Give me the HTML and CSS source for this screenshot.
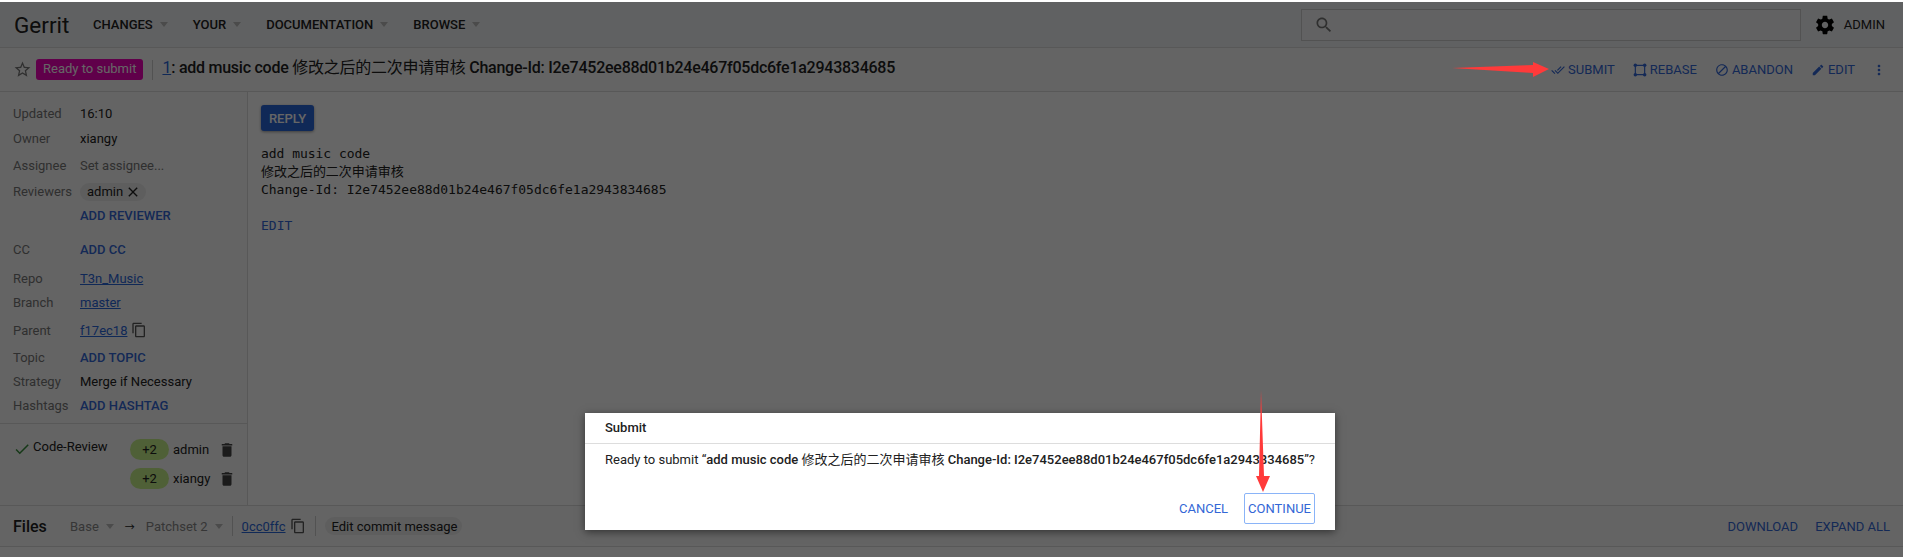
FILE: index.html
```html
<!DOCTYPE html>
<html lang="en">
<head>
  <meta charset="UTF-8">
  <title>Gerrit</title>
  <link rel="stylesheet" href="styles.css">
</head>
<body>
  <div class="page">
    <header class="topbar">
      <span class="logo">Gerrit</span>
      <nav class="nav">
        <span class="nav-item">CHANGES<i class="caret"></i></span>
        <span class="nav-item">YOUR<i class="caret"></i></span>
        <span class="nav-item">DOCUMENTATION<i class="caret"></i></span>
        <span class="nav-item">BROWSE<i class="caret"></i></span>
      </nav>
      <div class="search">
        <svg class="search-icon" viewBox="0 0 24 24"><path d="M15.5 14h-.79l-.28-.27C15.41 12.59 16 11.11 16 9.5 16 5.91 13.09 3 9.5 3S3 5.91 3 9.5 5.91 16 9.5 16c1.61 0 3.09-.59 4.23-1.57l.27.28v.79l5 4.99L20.49 19l-4.99-5zm-6 0C7.01 14 5 11.99 5 9.5S7.01 5 9.5 5 14 7.01 14 9.5 11.99 14 9.5 14z"/></svg>
      </div>
      <svg class="gear" viewBox="0 0 24 24"><path d="M19.43 12.98c.04-.32.07-.64.07-.98s-.03-.66-.07-.98l2.11-1.65c.19-.15.24-.42.12-.64l-2-3.46c-.12-.22-.39-.3-.61-.22l-2.49 1c-.52-.4-1.08-.73-1.69-.98l-.38-2.65C14.46 2.18 14.25 2 14 2h-4c-.25 0-.46.18-.49.42l-.38 2.65c-.61.25-1.17.59-1.69.98l-2.49-1c-.23-.09-.49 0-.61.22l-2 3.46c-.13.22-.07.49.12.64l2.11 1.65c-.04.32-.07.65-.07.98s.03.66.07.98l-2.11 1.65c-.19.15-.24.42-.12.64l2 3.46c.12.22.39.3.61.22l2.49-1c.52.4 1.08.73 1.69.98l.38 2.65c.03.24.24.42.49.42h4c.25 0 .46-.18.49-.42l.38-2.65c.61-.25 1.17-.59 1.69-.98l2.49 1c.23.09.49 0 .61-.22l2-3.46c.12-.22.07-.49-.12-.64l-2.11-1.65zM12 15.5c-1.93 0-3.5-1.57-3.5-3.5s1.57-3.5 3.5-3.5 3.5 1.57 3.5 3.5-1.57 3.5-3.5 3.5z"/></svg>
      <span class="user">ADMIN</span>
    </header>

    <section class="change-row">
      <svg class="star" viewBox="0 0 24 24"><path d="M22 9.24l-7.19-.62L12 2 9.19 8.63 2 9.24l5.46 4.73L5.82 21 12 17.27 18.18 21l-1.63-7.03L22 9.24zM12 15.4l-3.76 2.27 1-4.28-3.32-2.88 4.38-.38L12 6.1l1.71 4.04 4.38.38-3.32 2.88 1 4.28L12 15.4z"/></svg>
      <span class="status">Ready to submit</span>
      <span class="divider"></span>
      <h1 class="title"><a class="link">1</a>: add music code <span class="cjk">修改之后的二次申请审核</span> Change-Id: I2e7452ee88d01b24e467f05dc6fe1a2943834685</h1>
      <div class="actions">
        <span class="action"><svg viewBox="0 0 24 24"><path d="M18 7l-1.41-1.41-6.34 6.34 1.41 1.41L18 7zm4.24-1.41L11.66 16.17 7.48 12l-1.41 1.41L11.66 19l12-12-1.42-1.41zM.41 13.41L6 19l1.41-1.41L1.83 12 .41 13.41z"/></svg>SUBMIT</span>
        <span class="action"><svg viewBox="0 0 24 24"><path d="M4 3h16v2H4zM4 19h16v2H4zM3 4h2v16H3zM19 4h2v16h-2z"/><circle cx="4" cy="4" r="3"/><circle cx="20" cy="4" r="3"/><circle cx="4" cy="20" r="3"/><circle cx="20" cy="20" r="3"/></svg>REBASE</span>
        <span class="action"><svg viewBox="0 0 24 24"><path d="M12 2C6.48 2 2 6.48 2 12s4.48 10 10 10 10-4.48 10-10S17.52 2 12 2zM4 12c0-4.42 3.58-8 8-8 1.85 0 3.55.63 4.9 1.69L5.69 16.9C4.63 15.55 4 13.85 4 12zm8 8c-1.85 0-3.55-.63-4.9-1.69L18.31 7.1C19.37 8.45 20 10.15 20 12c0 4.42-3.58 8-8 8z"/></svg>ABANDON</span>
        <span class="action"><svg viewBox="0 0 24 24"><path d="M3 17.25V21h3.75L17.81 9.94l-3.75-3.75L3 17.25zM20.71 7.04c.39-.39.39-1.02 0-1.41l-2.34-2.34c-.39-.39-1.02-.39-1.41 0l-1.83 1.83 3.75 3.75 1.83-1.83z"/></svg>EDIT</span>
        <svg class="more" viewBox="0 0 24 24"><path d="M12 8c1.1 0 2-.9 2-2s-.9-2-2-2-2 .9-2 2 .9 2 2 2zm0 2c-1.1 0-2 .9-2 2s.9 2 2 2 2-.9 2-2-.9-2-2-2zm0 6c-1.1 0-2 .9-2 2s.9 2 2 2 2-.9 2-2-.9-2-2-2z"/></svg>
      </div>
    </section>

    <main class="main">
      <aside class="sidebar">
        <div class="meta">
          <div class="row h25"><span class="label">Updated</span><span>16:10</span></div>
          <div class="row h25"><span class="label">Owner</span><span>xiangy</span></div>
          <div class="row h28"><span class="label">Assignee</span><span class="muted">Set assignee...</span></div>
          <div class="row h25">
            <span class="label">Reviewers</span>
            <span class="chip">admin<svg viewBox="0 0 24 24"><path d="M19 6.41L17.59 5 12 10.59 6.41 5 5 6.41 10.59 12 5 17.59 6.41 19 12 13.41 17.59 19 19 17.59 13.41 12z"/></svg></span>
          </div>
          <div class="row h22 add-reviewer"><span class="label"></span><span class="btn-link">ADD REVIEWER</span></div>
          <div class="row h24"><span class="label">CC</span><span class="btn-link">ADD CC</span></div>
          <div class="row h24 repo"><span class="label">Repo</span><a class="link">T3n_Music</a></div>
          <div class="row h24"><span class="label">Branch</span><a class="link">master</a></div>
          <div class="row h32">
            <span class="label">Parent</span><a class="link">f17ec18</a>
            <svg class="copy" viewBox="0 0 24 24"><path d="M16 1H4c-1.1 0-2 .9-2 2v14h2V3h12V1zm3 4H8c-1.1 0-2 .9-2 2v14c0 1.1.9 2 2 2h11c1.1 0 2-.9 2-2V7c0-1.1-.9-2-2-2zm0 16H8V7h11v14z"/></svg>
          </div>
          <div class="row h23"><span class="label">Topic</span><span class="btn-link">ADD TOPIC</span></div>
          <div class="row h24"><span class="label">Strategy</span><span>Merge if Necessary</span></div>
          <div class="row h24"><span class="label">Hashtags</span><span class="btn-link">ADD HASHTAG</span></div>
        </div>
        <div class="labels">
          <div class="vote-title">
            <svg class="check" viewBox="0 0 24 24"><path d="M9 16.17L4.83 12l-1.42 1.41L9 19 21 7l-1.41-1.41z"/></svg>Code-Review
          </div>
          <div class="votes">
            <div class="vote"><span class="score">+2</span><span class="voter">admin</span><svg class="trash" viewBox="0 0 24 24"><path d="M6 19c0 1.1.9 2 2 2h8c1.1 0 2-.9 2-2V7H6v12zM19 4h-3.5l-1-1h-5l-1 1H5v2h14V4z"/></svg></div>
            <div class="vote"><span class="score">+2</span><span class="voter">xiangy</span><svg class="trash" viewBox="0 0 24 24"><path d="M6 19c0 1.1.9 2 2 2h8c1.1 0 2-.9 2-2V7H6v12zM19 4h-3.5l-1-1h-5l-1 1H5v2h14V4z"/></svg></div>
          </div>
        </div>
      </aside>
      <div class="content">
        <button class="reply">REPLY</button>
        <pre class="message">add music code
修改之后的二次申请审核
Change-Id: I2e7452ee88d01b24e467f05dc6fe1a2943834685</pre>
        <div class="edit-msg">EDIT</div>
      </div>
    </main>

    <section class="files">
      <span class="files-title">Files</span>
      <span class="select">Base<i class="caret"></i></span>
      <span class="arrow">→</span>
      <span class="select">Patchset 2<i class="caret"></i></span>
      <span class="divider"></span>
      <a class="link">0cc0ffc</a>
      <svg class="copy" viewBox="0 0 24 24"><path d="M16 1H4c-1.1 0-2 .9-2 2v14h2V3h12V1zm3 4H8c-1.1 0-2 .9-2 2v14c0 1.1.9 2 2 2h11c1.1 0 2-.9 2-2V7c0-1.1-.9-2-2-2zm0 16H8V7h11v14z"/></svg>
      <span class="divider"></span>
      <span class="chip edit-chip">Edit commit message</span>
      <div class="files-actions">
        <span class="btn-link">DOWNLOAD</span>
        <span class="btn-link">EXPAND ALL</span>
      </div>
    </section>

    <div class="backdrop"></div>

    <div class="dialog">
      <div class="dialog-head">Submit</div>
      <div class="dialog-body">Ready to submit “<b>add music code <span class="cjk">修改之后的二次申请审核</span> Change-Id: I2e7452ee88d01b24e467f05dc6fe1a2943834685</b>”?</div>
      <div class="dialog-foot">
        <span class="dialog-btn">CANCEL</span>
        <span class="dialog-btn focused">CONTINUE</span>
      </div>
    </div>
  </div>

  <svg class="marks" viewBox="0 0 1906 557">
    <polygon points="1452,68 1533,65 1533,62 1549,69 1533,77 1533,73"/>
    <polygon points="1261,390 1264,476 1270,476 1263,492 1256,476 1259,476"/>
  </svg>
</body>
</html>
```

FILE: styles.css
```css
* {
  box-sizing: border-box;
}
html, body {
  height: 100%;
}
body {
  margin: 0;
  background: #fff;
  font-family: Roboto, "Noto Sans CJK SC", sans-serif;
  font-size: 13px;
  color: #212121;
  overflow: hidden;
}
svg {
  fill: currentColor;
  flex: none;
}
.page {
  position: relative;
  height: 555px;
  margin: 2px 3px 0 0;
  background: #fff;
  overflow: hidden;
}
.backdrop {
  position: absolute;
  inset: 0;
  background: rgba(0,0,0,0.6);
}
.cjk {
  font-weight: 400;
}

/* top bar */
.topbar {
  height: 46px;
  display: flex;
  align-items: center;
  padding-left: 14px;
  background: #f1f3f4;
  border-bottom: 1px solid #ddd;
}
.logo {
  font-size: 22.5px;
  width: 79px;
}
.nav {
  display: flex;
  font-size: 13px;
  font-weight: 500;
}
.nav-item {
  display: flex;
  align-items: center;
  margin-right: 25px;
}
.caret {
  display: inline-block;
  width: 0;
  height: 0;
  margin-left: 7px;
  border: 4.5px solid transparent;
  border-top: 5px solid #bbb;
  border-bottom: 0;
}
.search {
  margin-left: auto;
  width: 500px;
  height: 32px;
  display: flex;
  align-items: center;
  padding-left: 12px;
  background: #f5f6f7;
  border: 1px solid #ccc;
}
.search-icon {
  width: 20px;
  height: 20px;
  color: #777;
}
.gear {
  width: 22px;
  height: 22px;
  margin-left: 13px;
  color: #000;
}
.user {
  margin: 0 18px 0 8px;
  font-size: 13px;
}

/* change row */
.change-row {
  height: 44px;
  display: flex;
  align-items: center;
  padding-left: 13px;
  background: #fafafa;
  border-bottom: 1px solid #ddd;
}
.star {
  width: 19px;
  height: 19px;
  color: #777;
}
.status {
  margin-left: 4px;
  padding: 0 7px;
  height: 21px;
  line-height: 20px;
  border-radius: 3px;
  background: #f000b8;
  color: #fff;
  font-size: 13px;
}
.divider {
  width: 1px;
  height: 20px;
  margin: 0 9px;
  background: #ccc;
}
.title {
  margin: 0 0 3px;
  font-size: 16px;
  font-weight: 500;
  line-height: 20px;
  letter-spacing: -0.25px;
}
.link {
  color: #2a66d9;
  text-decoration: underline;
}
.title .link {
  font-weight: 400;
}
.actions {
  margin-left: auto;
  display: flex;
  align-items: center;
}
.action {
  display: flex;
  align-items: center;
  margin-left: 18px;
  font-size: 13px;
  color: #3367d6;
}
.action svg {
  width: 14px;
  height: 14px;
  margin-right: 3px;
}
.more {
  width: 16px;
  height: 16px;
  margin: 0 16px;
  color: #3367d6;
}

/* sidebar */
.main {
  height: 414px;
  display: flex;
  background: #fff;
  border-bottom: 1px solid #ddd;
}
.sidebar {
  width: 248px;
  border-right: 1px solid #ddd;
  background: #fafafa;
}
.meta {
  padding-top: 9px;
  height: 332px;
  border-bottom: 1px solid #ddd;
}
.row {
  display: flex;
  align-items: center;
  padding-left: 13px;
}
.h22 { height: 22px; }
.h23 { height: 23px; }
.h24 { height: 24px; }
.h25 { height: 25px; }
.h28 { height: 28px; }
.h32 { height: 32px; }
.add-reviewer { margin-bottom: 11px; }
.repo { margin-top: 5px; }
.label {
  width: 67px;
  flex: none;
  color: #777;
}
.muted {
  color: #777;
}
.btn-link {
  color: #3367d6;
  font-weight: 500;
}
.chip {
  display: inline-flex;
  align-items: center;
  height: 18px;
  padding: 0 5px 0 7px;
  border-radius: 9px;
  background: #ebebeb;
}
.chip svg {
  width: 16px;
  height: 16px;
  margin-left: 2px;
}
.copy {
  width: 16px;
  height: 16px;
  margin-left: 4px;
  color: #555;
}
.labels {
  display: flex;
  padding: 11px 0 0 13px;
}
.vote-title {
  width: 117px;
  display: flex;
  align-items: flex-start;
  line-height: 20px;
  padding-top: 2px;
}
.check {
  width: 18px;
  height: 18px;
  margin: 3px 2px 0 0;
  color: #388e3c;
}
.vote {
  display: flex;
  align-items: center;
  height: 29px;
}
.score {
  width: 39px;
  height: 21px;
  line-height: 21px;
  text-align: center;
  border-radius: 11px;
  background: #c6f089;
}
.voter {
  width: 45px;
  margin-left: 4px;
}
.trash {
  width: 18px;
  height: 18px;
  color: #444;
}

/* commit message */
.content {
  flex: 1;
  padding: 13px 13px;
}
.reply {
  display: block;
  width: 53px;
  height: 26px;
  padding: 0;
  border: 0;
  border-radius: 3px;
  background: #2a66d9;
  color: #fff;
  font: 500 13px Roboto, sans-serif;
  box-shadow: 0 1px 3px rgba(0,0,0,0.4);
}
.message {
  margin: 14px 0 0;
  font: 13px/18px "DejaVu Sans Mono", "Noto Sans CJK SC", monospace;
  letter-spacing: -0.03px;
}
.edit-msg {
  margin-top: 18px;
  font: 13px/18px "DejaVu Sans Mono", monospace;
  color: #3367d6;
}

/* files header */
.files {
  height: 41px;
  display: flex;
  align-items: center;
  padding-left: 13px;
  background: #fafafa;
  border-bottom: 1px solid #ddd;
}
.files-title {
  width: 57px;
  font-size: 16px;
  font-weight: 500;
}
.select {
  display: flex;
  align-items: center;
  color: #888;
  font-size: 13px;
}
.arrow {
  margin: 0 11px;
  font-size: 10px;
}
.edit-chip {
  height: 18px;
  font-size: 13px;
}
.files-actions {
  margin-left: auto;
  display: flex;
  gap: 17px;
  padding-right: 13px;
}
.files-actions .btn-link {
  font-weight: 400;
}

/* submit dialog */
.dialog {
  position: absolute;
  left: 585px;
  top: 411px;
  width: 750px;
  height: 117px;
  background: #fff;
  box-shadow: 0 2px 8px rgba(0,0,0,0.5);
}
.dialog-head {
  height: 31px;
  line-height: 30px;
  padding-left: 20px;
  font-weight: 500;
  border-bottom: 1px solid #ddd;
}
.dialog-body {
  padding: 7px 20px 0;
  line-height: 18px;
}
.dialog-body b {
  font-weight: 500;
}
.dialog-foot {
  display: flex;
  justify-content: flex-end;
  align-items: center;
  gap: 16px;
  margin-top: 24px;
  padding-right: 20px;
}
.dialog-btn {
  color: #3367d6;
}
.focused {
  padding: 7px 3px;
  border: 1px solid #8ab4f8;
  border-radius: 2px;
}

/* red arrows drawn over the screenshot */
.marks {
  position: fixed;
  left: 0;
  top: 0;
  width: 1906px;
  height: 557px;
  fill: #ff3a3a;
  pointer-events: none;
}
```
